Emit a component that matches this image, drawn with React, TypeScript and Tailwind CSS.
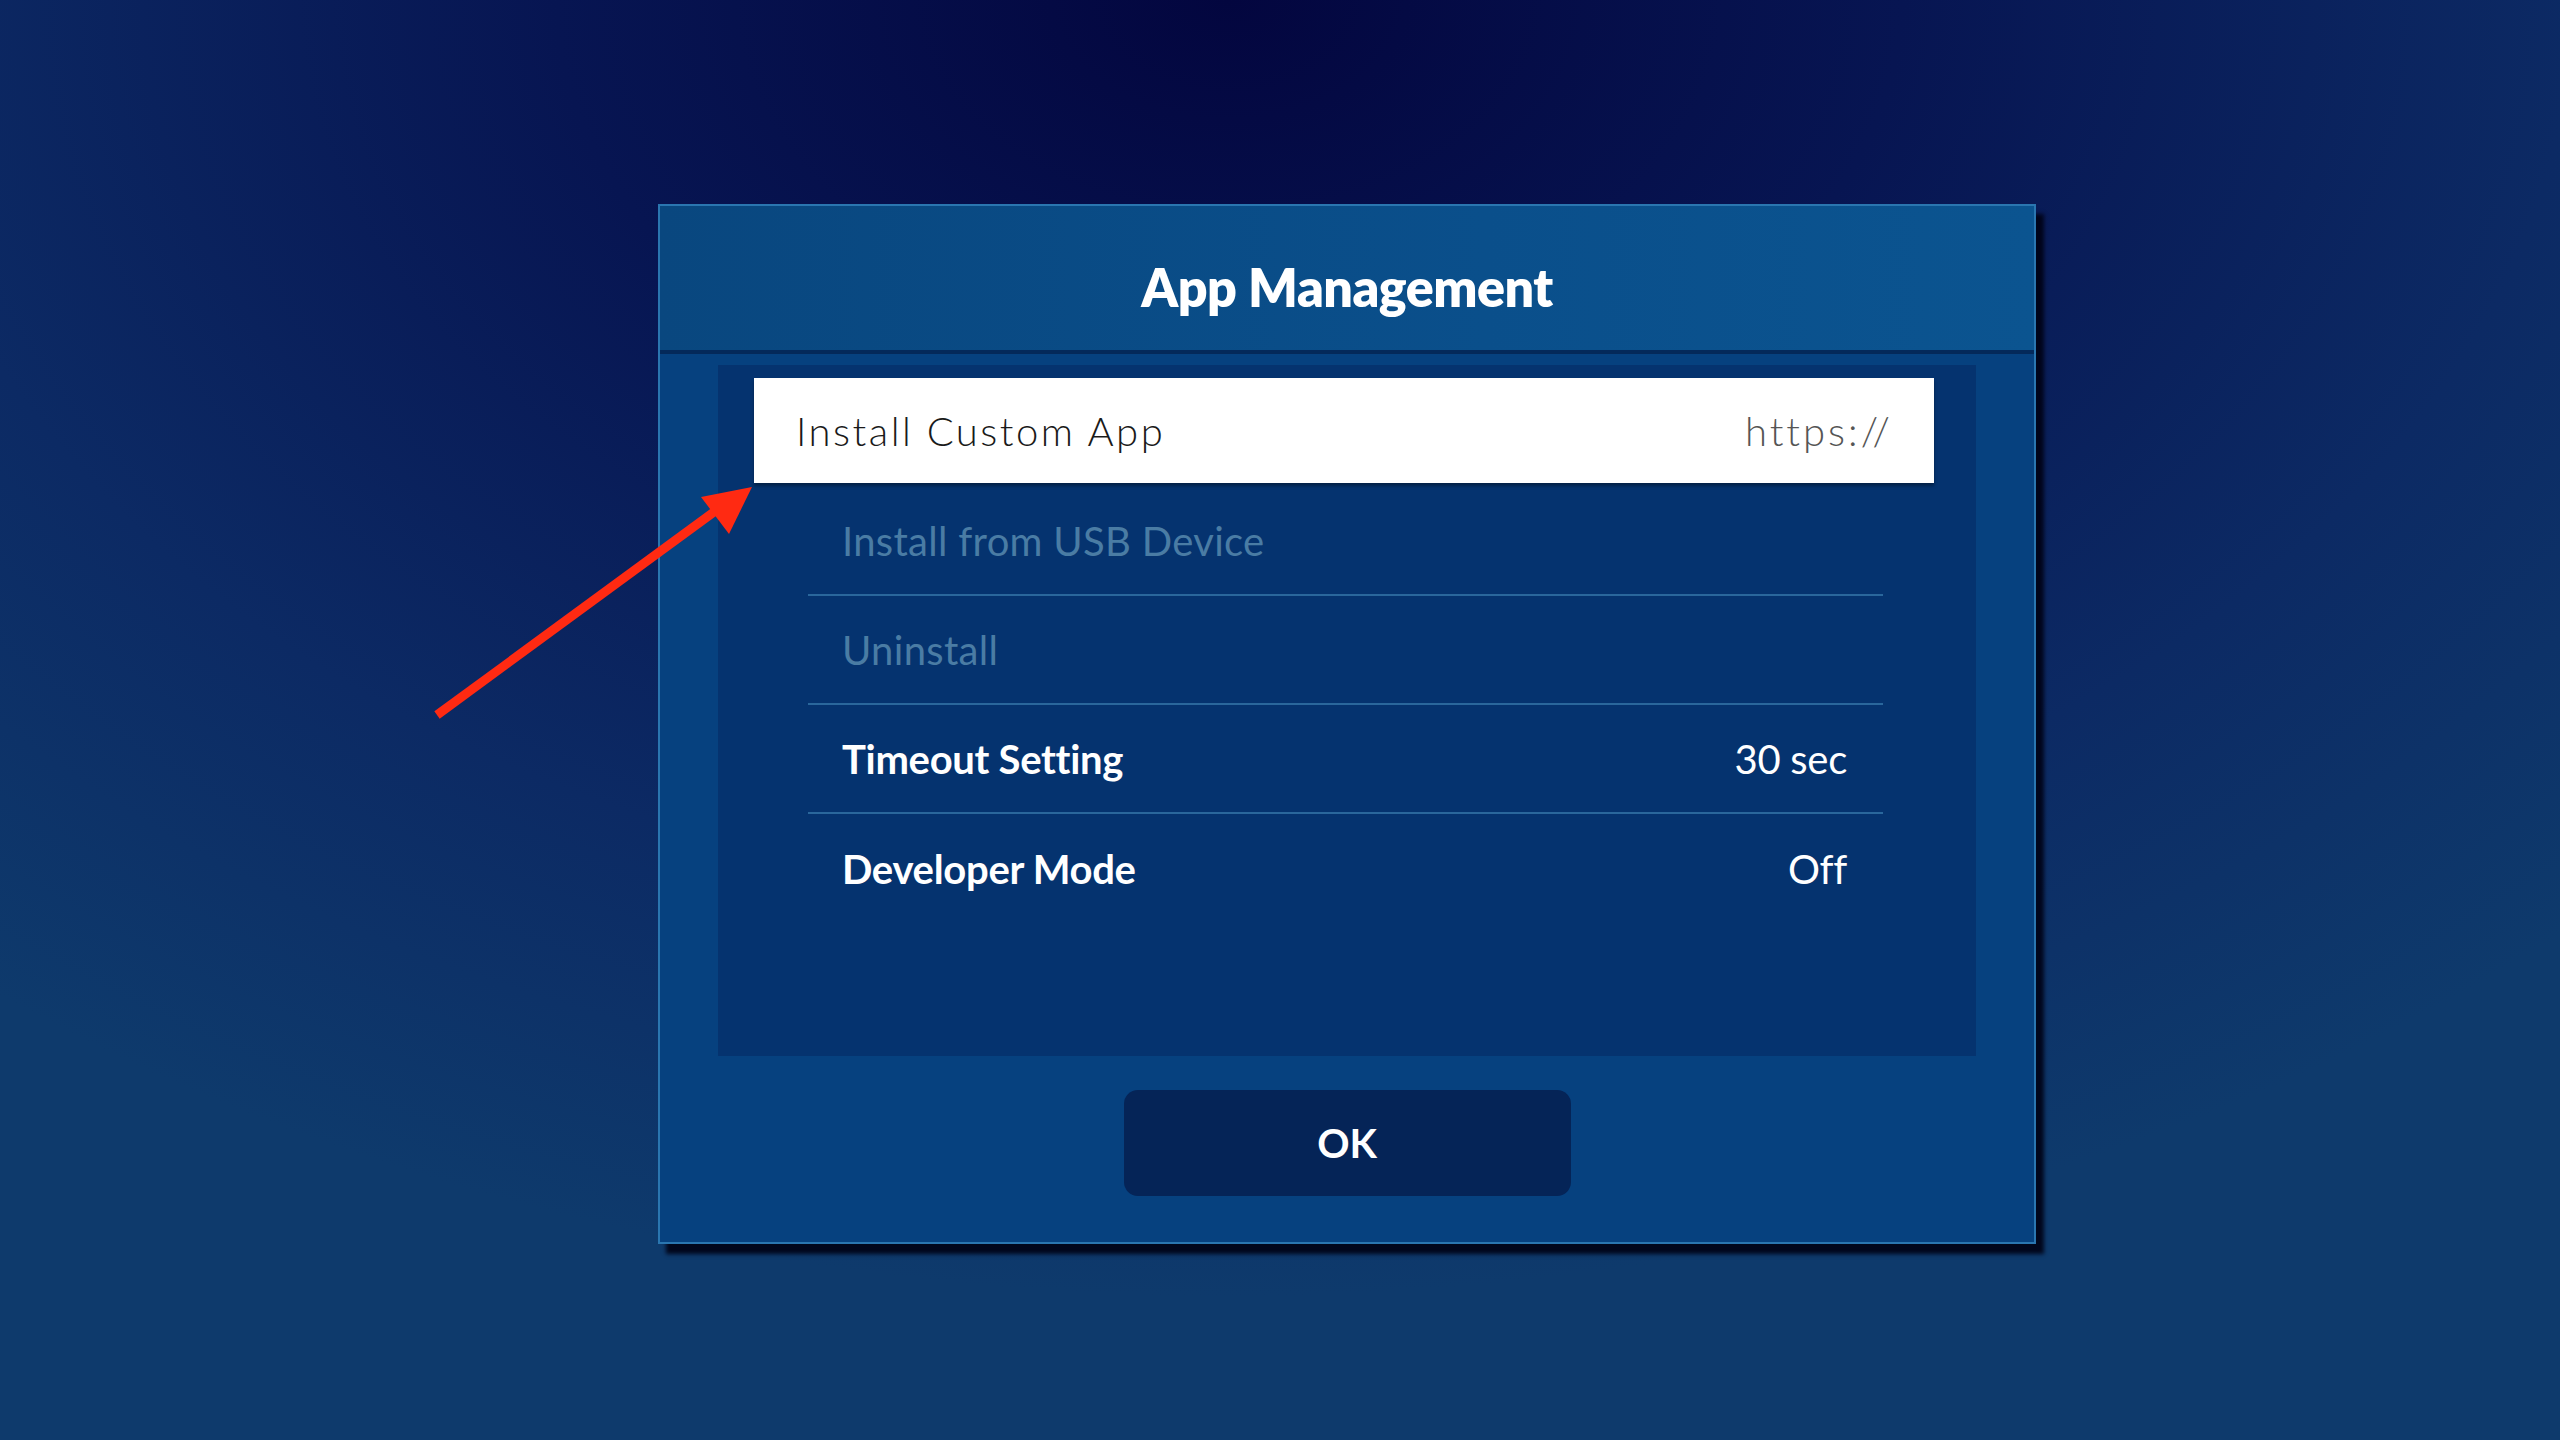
import React from 'react';

type Row = { label: string; value?: string; disabled?: boolean };

const rows: Row[] = [
  { label: 'Install from USB Device', disabled: true },
  { label: 'Uninstall', disabled: true },
  { label: 'Timeout Setting', value: '30 sec' },
  { label: 'Developer Mode', value: 'Off' },
];

function Arrow() {
  return (
    <svg className="absolute inset-0 pointer-events-none" width="2560" height="1440" viewBox="0 0 2560 1440">
      <line x1="437" y1="715" x2="722" y2="506" stroke="#ff2a12" strokeWidth="9" strokeLinecap="butt" />
      <polygon points="752,487 701,497 729,534" fill="#ff2a12" />
    </svg>
  );
}

export default function App() {
  return (
    <div className="relative w-[2560px] h-[1440px] overflow-hidden font-['Lato',sans-serif] bg-[radial-gradient(ellipse_75%_90%_at_48%_0%,#03063f_0%,#071552_35%,#0c2a64_70%,#0e3a6c_100%)]">
      <div className="pt-[204px] pl-[658px]">
        <div className="w-[1378px] h-[1040px] flex flex-col border-2 border-[#2a76b0] bg-[#06417f] shadow-[8px_10px_4px_rgba(0,2,20,0.9)]">
          {/* header */}
          <div className="h-[148px] shrink-0 flex items-center justify-center bg-[linear-gradient(90deg,#09477f_0%,#0a4f8b_60%,#0b5490_100%)] border-b-4 border-[#04295a]">
            <h1 className="text-[52px] font-extrabold text-white tracking-[-0.5px] mt-[18px]">App Management</h1>
          </div>

          {/* body */}
          <div className="flex-1 flex flex-col px-[58px] pt-[11px]">
            <div className="h-[691px] bg-[#05336f] pt-[13px] flex flex-col">
              <div className="ml-[36px] mr-[42px] h-[105px] bg-white flex items-center justify-between pl-[42px] pr-[41px] shadow-[0_3px_3px_rgba(0,0,0,0.35)]">
                <span className="text-[40px] text-[#1a1a1a] tracking-[2.5px] font-light">Install Custom App</span>
                <span className="text-[40px] text-[#555] tracking-[3px] font-light">https://</span>
              </div>
              <div className="ml-[90px] mr-[93px] mt-[4px] flex flex-col">
                {rows.map((r, i) => (
                  <div
                    key={r.label}
                    className={
                      'h-[109px] flex items-center justify-between pl-[34px] pr-[36px] ' +
                      (i < rows.length - 1 ? 'border-b-2 border-[#2a679c]' : '')
                    }
                  >
                    <span
                      className={
                        r.disabled
                          ? 'text-[40px] text-[#4a7ca4] tracking-[0.3px]'
                          : 'text-[40px] text-white font-bold tracking-[-0.3px]'
                      }
                    >
                      {r.label}
                    </span>
                    {r.value && <span className="text-[40px] text-white tracking-[-0.3px]">{r.value}</span>}
                  </div>
                ))}
              </div>
            </div>

            <div className="flex justify-center pt-[34px]">
              <button className="w-[447px] h-[106px] rounded-[14px] bg-[#052457] flex items-center justify-center text-[40px] font-bold text-white">
                OK
              </button>
            </div>
          </div>
        </div>
      </div>
      <Arrow />
    </div>
  );
}
